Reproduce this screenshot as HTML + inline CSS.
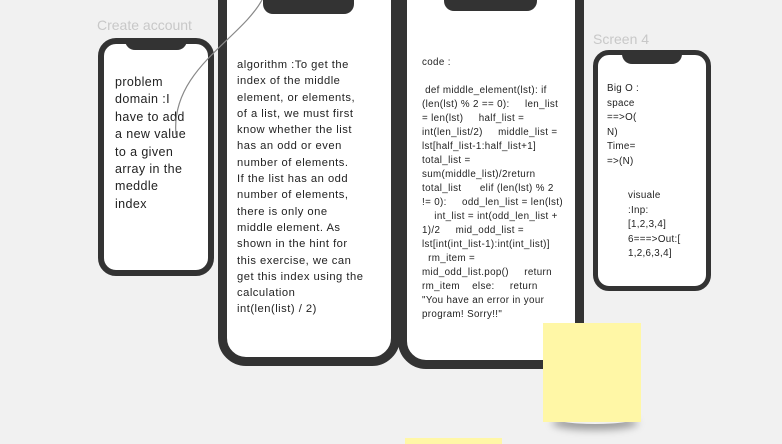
<!DOCTYPE html>
<html><head><style>
body{margin:0;width:782px;height:442px;background:#f1f1f1;position:relative;overflow:hidden;font-family:"Liberation Sans",sans-serif}
.ph{position:absolute;background:#fff;border:solid #333;box-sizing:border-box}
.notch{position:absolute;background:#333;border-radius:0 0 10px 10px}
.t{position:absolute;color:#222;white-space:pre}
.lbl{position:absolute;color:#c8c8c8;font-size:14px}
</style></head><body>
<div class="lbl" style="left:97px;top:17px">Create account</div>
<div class="lbl" style="left:593px;top:31px">Screen 4</div>

<div class="ph" style="left:98px;top:38px;width:116px;height:238px;border-width:6px;border-radius:18px"></div>
<div class="notch" style="left:125px;top:38px;width:62px;height:12px"></div>
<div class="t" style="left:115px;top:74px;font-size:12.5px;line-height:17.4px;letter-spacing:0.4px">problem
domain :I
have to add
a new value
to a given
array in the
meddle
index</div>

<div class="ph" style="left:218px;top:-30px;width:182px;height:396px;border-width:9px;border-radius:28px"></div>
<div class="notch" style="left:263px;top:0;width:91px;height:14px"></div>
<div class="t" style="left:237px;top:57px;font-size:11.2px;line-height:16.3px;letter-spacing:0.5px">algorithm :To get the
index of the middle
element, or elements,
of a list, we must first
know whether the list
has an odd or even
number of elements.
If the list has an odd
number of elements,
there is only one
middle element. As
shown in the hint for
this exercise, we can
get this index using the
calculation
int(len(list) / 2)</div>

<div class="ph" style="left:398px;top:-30px;width:186px;height:399px;border-width:9px;border-radius:28px"></div>
<div class="notch" style="left:444px;top:0;width:93px;height:11px"></div>
<div class="t" style="left:422px;top:56px;font-size:9.8px;line-height:14px;letter-spacing:0.35px">code :

 def middle_element(lst): if
(len(lst) % 2 == 0):     len_list
= len(lst)     half_list =
int(len_list/2)     middle_list =
lst[half_list-1:half_list+1]
total_list =
sum(middle_list)/2return
total_list      elif (len(lst) % 2
!= 0):     odd_len_list = len(lst)
    int_list = int(odd_len_list +
1)/2     mid_odd_list =
lst[int(int_list-1):int(int_list)]
  rm_item =
mid_odd_list.pop()     return
rm_item    else:     return
"You have an error in your
program! Sorry!!"</div>

<div class="ph" style="left:593px;top:50px;width:118px;height:241px;border-width:5px;border-radius:16px"></div>
<div class="notch" style="left:622px;top:50px;width:60px;height:14px"></div>
<div class="t" style="left:607px;top:82px;font-size:9.8px;line-height:14.6px;letter-spacing:0.3px">Big O :
space
==&gt;O(
N)
Time=
=&gt;(N)</div>
<div class="t" style="left:628px;top:189px;font-size:9.8px;line-height:14.6px;letter-spacing:0.3px">visuale
:Inp:
[1,2,3,4]
6===&gt;Out:[
1,2,6,3,4]</div>

<svg style="position:absolute;left:0;top:0" width="782" height="442"><path d="M262 0 C240 40 170 70 176 135" fill="none" stroke="#888" stroke-width="1.2"/></svg>

<div style="position:absolute;left:552px;top:410px;width:86px;height:14px;border-radius:50%;box-shadow:0 6px 8px rgba(0,0,0,.35)"></div>
<div style="position:absolute;left:543px;top:323px;width:98px;height:99px;background:#fff7a6"></div>
<div style="position:absolute;left:405px;top:438px;width:97px;height:6px;background:#fff7a6"></div>
</body></html>
